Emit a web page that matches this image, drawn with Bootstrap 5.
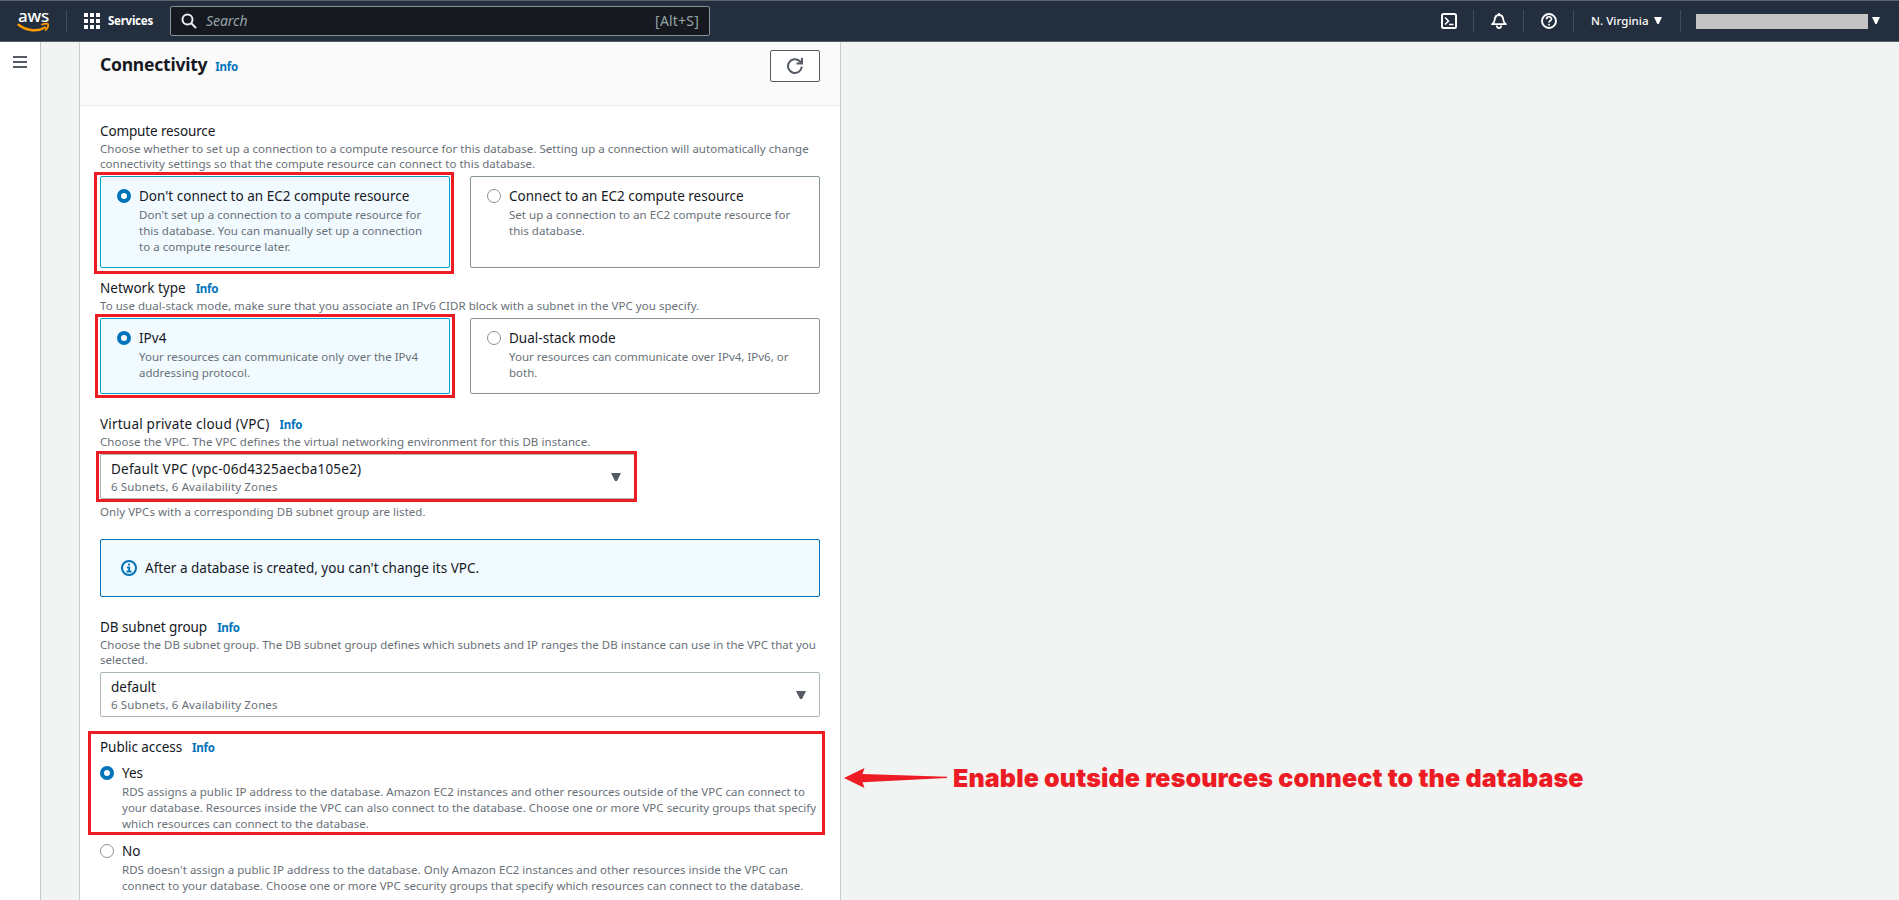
<!DOCTYPE html>
<html lang="en">
<head>
<meta charset="utf-8">
<meta name="viewport" content="width=device-width, initial-scale=1">
<title>Create database - RDS</title>
<link href="https://cdn.jsdelivr.net/npm/bootstrap@5.3.0/dist/css/bootstrap.min.css" rel="stylesheet">
<style>
  body { font-family: "Noto Sans", "Open Sans", sans-serif; font-size: 13.5px; line-height: 20px; color: #16191f; background: #f2f3f3; letter-spacing: .01px; }
  svg { display: block; flex: none; }
  .topbar { height: 42px; background: #232f3e; border-top: 1px solid #5b626b; border-bottom: 1px solid #545b64; color: #fff; font-size: 12px; }
  .topbar .rule { width: 1px; height: 22px; background: #414d5c; flex: none; }
  .aws-logo { width: 48px; height: 40px; margin-left: 10px; }
  .aws-logo text { font: 500 17px "Noto Sans", sans-serif; letter-spacing: -.2px; fill: #fff; }
  .services { margin-left: 17px; gap: 8px; font-size: 11.5px; font-weight: 700; letter-spacing: -.25px; width: 86px; }
  .searchbox { width: 540px; height: 30px; background: #16191f; border: 1px solid #879596; border-radius: 2px; padding: 0 10px; color: #95a5a6; font-size: 14px; }
  .searchbox em { margin-left: 9px; letter-spacing: -.05px; }
  .searchbox .shortcut { letter-spacing: .2px; }
  .account-mask { width: 172px; height: 15px; background: #c4c4c4; }
  .region { font-weight: 500; font-size: 11.5px; letter-spacing: .05px; margin-left: 17px; width: 58px; }
  .stage { height: 858px; }
  .side { width: 41px; background: #fff; border-right: 1px solid #c3c8cc; padding: 14px 0 0 13px; }
  .side i { display: block; width: 14px; height: 2px; background: #545b64; margin-bottom: 3px; }
  .panel { width: 762px; margin-left: 38px; background: #fff; border: solid #c5cccf; border-width: 0 1px; }
  .panel-head { height: 64px; background: #fafafa; border-bottom: 1px solid #eaeded; padding: 8px 20px 0; }
  .panel-head h2 { font-size: 17.5px; line-height: 28px; font-weight: 700; letter-spacing: -.23px; margin: 0; }
  .refresh { width: 50px; height: 32px; border: 1px solid #545b64; border-radius: 2px; background: #fff; padding: 0; }
  .panel-main { padding: 15px 20px 0; }
  .info { color: #0073bb; font-size: 11.5px; font-weight: 700; letter-spacing: -.25px; text-decoration: none; }
  .field-label { height: 20px; gap: 10px; }
  .hint { color: #687078; font-size: 11.5px; line-height: 15px; letter-spacing: .025px; white-space: nowrap; }
  .hint-16 { line-height: 16px; padding-top: 1px; }
  .t-tight { letter-spacing: -.13px; }
  .t-snug { letter-spacing: -.06px; }
  .t-loose { letter-spacing: .21px; }
  .h-open { letter-spacing: .045px; }
  .h-wide { letter-spacing: .065px; }
  .h-zones { letter-spacing: .13px; }
  .h-close { letter-spacing: .002px; }
  .tile { height: 92px; flex: 1 1 0; border: 1px solid #879596; border-radius: 2px; padding: 9px 16px 0; gap: 8px; }
  .tile-short { height: 76px; }
  .tile-on { background: #f1faff; border-color: #00a1c9; }
  .tiles { gap: 20px; margin-top: 5px; }
  .dot { width: 14px; height: 14px; border: 1px solid #879596; border-radius: 50%; background: #fff; flex: none; margin-top: 3px; }
  .dot-on { border: 4px solid #0073bb; }
  .picker { height: 45px; border: 1px solid #aab7b8; border-radius: 2px; margin-top: 5px; padding: 4px 13px 0 10px; background: #fff; }
  .picker-vpc { width: 535px; }
  .picker .hint { margin-top: -1px; }
  .picker svg { margin-top: 14px; }
  .notice { height: 58px; border: 1px solid #0073bb; border-radius: 2px; background: #f1faff; padding: 0 20px; margin-top: 20px; gap: 8px; }
  .section-gap { margin-top: 20px; }
  .mark-box { position: absolute; border: 3px solid #ed1c24; pointer-events: none; }
  .m1 { inset: -5px -5px -7px -7px; }
  .m2 { inset: -5px -6px; }
  .m3 { inset: -4px -3px -4px -5px; }
  .m4 { left: -12px; right: -5px; top: -6px; height: 104px; }
  .callout-note { position: absolute; left: 744px; top: 26px; color: #ed1c24; font: 900 25px/30px Inter, Roboto, sans-serif; letter-spacing: .13px; white-space: nowrap; gap: 6px; }
</style>
</head>
<body class="overflow-hidden">
<nav class="topbar d-flex align-items-center">
  <svg class="aws-logo" viewBox="0 0 48 40"><text x="8" y="21">aws</text><path d="M8.500 23.800C17 30.300 28 30.800 35 26.500" fill="none" stroke="#f90" stroke-width="2.400" stroke-linecap="round"/><path d="M32 23.500c2.500-1 5-1 6-.4.500 1.500-.5 4.200-2.400 6" fill="none" stroke="#f90" stroke-width="1.700" stroke-linecap="round" stroke-linejoin="round"/></svg>
  <span class="rule ms-2"></span>
  <div class="services d-flex align-items-center">
    <svg width="16" height="16" fill="#fff"><path d="M0 0h4v4H0zM6 0h4v4H6zM12 0h4v4h-4zM0 6h4v4H0zM6 6h4v4H6zM12 6h4v4h-4zM0 12h4v4H0zM6 12h4v4H6zM12 12h4v4h-4z"/></svg>
    <span>Services</span>
  </div>
  <div class="searchbox d-flex align-items-center">
    <svg width="16" height="16" fill="none" stroke="#eaeded" stroke-width="2"><circle cx="6.500" cy="6.500" r="5"/><path d="m10 10 5 5"/></svg>
    <em>Search</em><span class="shortcut ms-auto">[Alt+S]</span>
  </div>
  <div class="d-flex align-items-center ms-auto" style="margin-right:19px">
    <svg width="16" height="16" fill="none" stroke="#fff" stroke-width="2"><rect x="1" y="1" width="14" height="14" rx="1.500"/><path d="m4 4.500 3.500 3.500L4 11.500M8 11.500h4.500" stroke-width="1.600"/></svg>
    <span class="rule ms-3"></span>
    <svg class="ms-3 me-3" style="padding-left:1px" width="17" height="16" viewBox="0 0 16 16" fill="none" stroke="#fff" stroke-width="1.800" stroke-linejoin="round"><path d="M1 11.200c2.800-1.400 2.500-3.700 3-6C4.400 3.200 6 2 8 2s3.600 1.200 4 3.200c.5 2.300.2 4.600 3 6zM8 2V0M5.800 12.500c.2 3.400 4.200 3.400 4.400 0"/></svg>
    <span class="rule"></span>
    <svg class="ms-3 me-3" style="padding-left:1px" width="17" height="16" viewBox="0 0 16 16" fill="none" stroke="#fff" stroke-width="1.900"><circle cx="8" cy="8" r="7"/><path d="M5.500 6.200C5.500 3 10.500 3 10.500 6 10.500 7.800 8 7.600 8 9.600M8 10.800v1.800" stroke-width="1.700"/></svg>
    <span class="rule"></span>
    <span class="region">N. Virginia</span>
    <svg class="ms-1" width="10" height="8" fill="#fff"><path d="M1 0h8L5.700 7H4.300z"/></svg>
    <span class="rule" style="margin-left:17px"></span>
    <span class="account-mask" style="margin-left:15px"></span>
    <svg style="margin-left:4px" width="8" height="8" fill="#fff"><path d="M0 0h8L4.700 7H3.300z"/></svg>
  </div>
</nav>

<div class="stage d-flex">
  <aside class="side"><i></i><i></i><i></i></aside>
  <main class="panel">
    <header class="panel-head d-flex justify-content-between align-items-start">
      <div class="d-flex align-items-baseline gap-2"><h2>Connectivity</h2><a class="info" href="#">Info</a></div>
      <button class="refresh d-flex align-items-center justify-content-center" aria-label="Refresh">
        <svg width="16" height="16" fill="none" stroke="#545b64" stroke-width="2"><path d="M14.800 8.500A6.900 6.900 0 1 1 12.600 3L14 4.500M15 0v5.500H9.500"/></svg>
      </button>
    </header>
    <div class="panel-main">
      <section>
        <div class="t-tight">Compute resource</div>
        <div class="hint"><span class="h-open">Choose whether to set up a connection to a compute resource for this database. Setting up a connection will automatically change</span><br>connectivity settings so that the compute resource can connect to this database.</div>
        <div class="tiles d-flex">
          <div class="tile tile-on d-flex position-relative"><span class="dot dot-on"></span>
            <div><div>Don't connect to an EC2 compute resource</div><div class="hint hint-16">Don't set up a connection to a compute resource for<br>this database. You can manually set up a connection<br>to a compute resource later.</div></div>
            <span class="mark-box m1"></span></div>
          <div class="tile d-flex"><span class="dot"></span>
            <div><div>Connect to an EC2 compute resource</div><div class="hint hint-16">Set up a connection to an EC2 compute resource for<br>this database.</div></div></div>
        </div>
      </section>
      <section style="margin-top:10px">
        <div class="field-label d-flex align-items-baseline"><span>Network type</span><a class="info" href="#">Info</a></div>
        <div class="hint h-open">To use dual-stack mode, make sure that you associate an IPv6 CIDR block with a subnet in the VPC you specify.</div>
        <div class="tiles d-flex">
          <div class="tile tile-short tile-on d-flex position-relative"><span class="dot dot-on"></span>
            <div><div>IPv4</div><div class="hint hint-16 h-close">Your resources can communicate only over the IPv4<br>addressing protocol.</div></div>
            <span class="mark-box m2"></span></div>
          <div class="tile tile-short d-flex"><span class="dot"></span>
            <div><div>Dual-stack mode</div><div class="hint hint-16 h-close">Your resources can communicate over IPv4, IPv6, or<br>both.</div></div></div>
        </div>
      </section>
      <section class="section-gap">
        <div class="field-label d-flex align-items-baseline"><span class="t-loose">Virtual private cloud (VPC)</span><a class="info" href="#">Info</a></div>
        <div class="hint h-wide">Choose the VPC. The VPC defines the virtual networking environment for this DB instance.</div>
        <div class="picker picker-vpc d-flex justify-content-between position-relative">
          <div><div class="t-loose">Default VPC (vpc-06d4325aecba105e2)</div><div class="hint hint-16 h-zones">6 Subnets, 6 Availability Zones</div></div>
          <svg width="10" height="8" fill="#545b64"><path d="M0 0h10L6 8H4z"/></svg>
          <span class="mark-box m3"></span>
        </div>
        <div class="hint h-open" style="margin-top:5px">Only VPCs with a corresponding DB subnet group are listed.</div>
      </section>
      <div class="notice d-flex align-items-center">
        <svg width="16" height="16" fill="none" stroke="#0073bb" stroke-width="2"><circle cx="8" cy="8" r="7"/><path d="M8 3.500v2M6 7.500h2.200V12M5.500 11.500h5" stroke-width="1.800"/></svg>
        <span>After a database is created, you can't change its VPC.</span>
      </div>
      <section class="section-gap">
        <div class="field-label d-flex align-items-baseline"><span class="t-snug">DB subnet group</span><a class="info" href="#">Info</a></div>
        <div class="hint h-close">Choose the DB subnet group. The DB subnet group defines which subnets and IP ranges the DB instance can use in the VPC that you<br>selected.</div>
        <div class="picker d-flex justify-content-between">
          <div><div>default</div><div class="hint hint-16 h-zones">6 Subnets, 6 Availability Zones</div></div>
          <svg width="10" height="8" fill="#545b64"><path d="M0 0h10L6 8H4z"/></svg>
        </div>
      </section>
      <section class="section-gap position-relative">
        <div class="field-label d-flex align-items-baseline"><span class="t-snug">Public access</span><a class="info" href="#">Info</a></div>
        <div class="d-flex gap-2" style="margin-top:6px"><span class="dot dot-on"></span>
          <div><div>Yes</div><div class="hint hint-16">RDS assigns a public IP address to the database. Amazon EC2 instances and other resources outside of the VPC can connect to<br>your database. Resources inside the VPC can also connect to the database. Choose one or more VPC security groups that specify<br>which resources can connect to the database.</div></div></div>
        <div class="d-flex gap-2" style="margin-top:9px"><span class="dot"></span>
          <div><div>No</div><div class="hint hint-16">RDS doesn't assign a public IP address to the database. Only Amazon EC2 instances and other resources inside the VPC can<br>connect to your database. Choose one or more VPC security groups that specify which resources can connect to the database.</div></div></div>
        <span class="mark-box m4"></span>
        <div class="callout-note d-flex align-items-center">
          <svg width="103" height="20" fill="#ed1c24"><path d="M0 10 20.500 0 18.500 6 103 8.700V10L18.500 14.200 20.500 20z"/></svg>
          <span>Enable outside resources connect to the database</span>
        </div>
      </section>
    </div>
  </main>
</div>
<script src="https://cdn.jsdelivr.net/npm/bootstrap@5.3.0/dist/js/bootstrap.bundle.min.js"></script>
</body>
</html>
